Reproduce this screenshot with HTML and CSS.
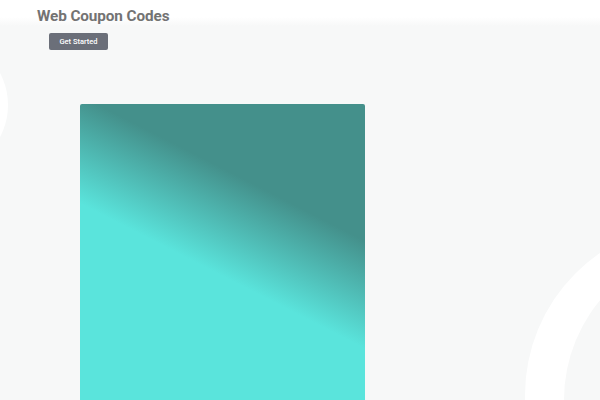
FILE: index.html
```html
<!DOCTYPE html>
<html>
<head>
<meta charset="utf-8">
<link rel="stylesheet" href="styles.css">
</head>
<body>
<div class="bg">
  <div class="deco deco-left"></div>
  <div class="deco ring-outer"></div>
  <div class="deco ring-inner"></div>
</div>
<header class="top">
  <h1 class="title">Web Coupon Codes</h1>
</header>
<main class="content">
  <a class="btn">Get Started</a>
  <div class="card"></div>
</main>
</body>
</html>
```

FILE: styles.css
```css
html, body {
  margin: 0;
  padding: 0;
}
html {
  overflow: hidden;
}
body {
  width: 600px;
  height: 400px;
  overflow: hidden;
  position: relative;
  background: linear-gradient(180deg, #ffffff 0, #ffffff 17px, #f7f8f8 26px, #f7f8f8 100%);
  font-family: Roboto, "Liberation Sans", sans-serif;
}
.bg {
  position: absolute;
  left: 0;
  top: 0;
  width: 600px;
  height: 400px;
  overflow: hidden;
  z-index: 0;
}
.deco {
  position: absolute;
  border-radius: 50%;
}
.deco-left {
  left: -128px;
  top: 37px;
  width: 136px;
  height: 136px;
  background: #ffffff;
}
.ring-outer {
  left: 525px;
  top: 223px;
  width: 344px;
  height: 344px;
  background: #ffffff;
}
.ring-inner {
  left: 564px;
  top: 244px;
  width: 312px;
  height: 312px;
  background: #f7f8f8;
}
.top {
  position: relative;
  z-index: 1;
  padding: 6px 0 0 37px;
}
.title {
  margin: 0;
  font-size: 15.3px;
  line-height: 20px;
  font-weight: 700;
  color: #737373;
  letter-spacing: -0.1px;
}
.content {
  position: relative;
  z-index: 1;
  display: flex;
  flex-direction: column;
  align-items: flex-start;
}
.btn {
  margin: 7px 0 0 49px;
  width: 59px;
  height: 17px;
  box-sizing: border-box;
  background: #6b6f79;
  border-radius: 2px;
  color: #ffffff;
  font-size: 7.5px;
  font-weight: 500;
  line-height: 17px;
  text-align: center;
}
.card {
  margin: 54px 0 0 80px;
  width: 285px;
  height: 296px;
  border-radius: 2px 2px 0 0;
  background: linear-gradient(207deg, #44908b 122px, #5ae4dc 218px);
}
```
